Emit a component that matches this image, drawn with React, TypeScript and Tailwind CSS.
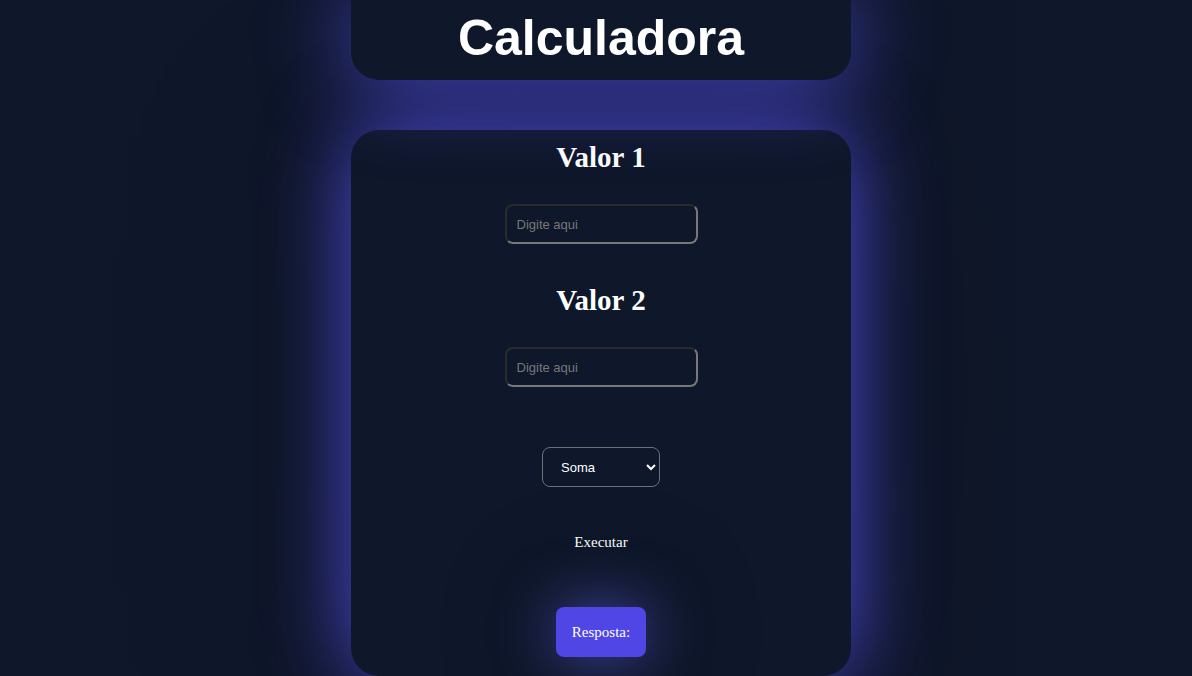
import { useState } from 'react';

function Campo({ label }: { label: string }) {
  return (
    <>
      <h2 className="font-['Liberation_Serif',serif] font-bold text-[29px] leading-8 text-white">
        {label}
      </h2>
      <input
        type="text"
        placeholder="Digite aqui"
        className="mt-[31px] w-[193px] h-10 rounded-lg border-2 border-t-[#2a2a2a] border-l-[#2a2a2a] border-b-[#787878] border-r-[#787878] bg-transparent px-[10px] font-['Liberation_Sans',sans-serif] text-[13px] text-white placeholder:text-[#787878] outline-none"
      />
    </>
  );
}

export default function App() {
  const [op, setOp] = useState('soma');

  return (
    <div className="h-screen overflow-hidden bg-[#0f172a] pl-[10px] flex flex-col items-center">
      <header className="relative z-10 w-[500px] h-20 shrink-0 rounded-b-[28px] bg-[#0f172a] flex items-center justify-center shadow-[0_0_85px_rgba(84,80,232,0.85)]">
        <h1 className="font-['Liberation_Sans',sans-serif] font-bold text-[50px] leading-none text-white -mt-1">
          Calculadora
        </h1>
      </header>

      <main className="mt-[50px] w-[500px] h-[546px] shrink-0 rounded-[28px] bg-[#0f172a] flex flex-col items-center shadow-[0_0_85px_rgba(84,80,232,0.95),0_0_220px_rgba(0,0,0,0.35)]">
        <div className="mt-[11px] flex flex-col items-center">
          <Campo label="Valor 1" />
        </div>
        <div className="mt-10 flex flex-col items-center">
          <Campo label="Valor 2" />
        </div>

        <select
          value={op}
          onChange={(e) => setOp(e.target.value)}
          className="mt-[60px] w-[118px] h-10 rounded-lg border border-[#6b6f78] bg-transparent pl-[14px] pr-1 font-['Liberation_Sans',sans-serif] text-[13px] text-white scheme-dark"
        >
          <option value="soma">Soma</option>
          <option value="sub">Subtração</option>
          <option value="mult">Multiplicação</option>
          <option value="div">Divisão</option>
        </select>

        <button className="mt-[45px] h-5 bg-transparent font-['Liberation_Serif',serif] text-[15px] leading-5 text-white">
          Executar
        </button>

        <button className="mt-[55px] w-[90px] h-[50px] rounded-lg bg-[#4f46e5] font-['Liberation_Serif',serif] text-[15px] text-white shadow-[0_0_60px_rgba(99,102,241,0.65),0_0_120px_rgba(0,0,0,0.4)]">
          Resposta:
        </button>
      </main>
    </div>
  );
}
